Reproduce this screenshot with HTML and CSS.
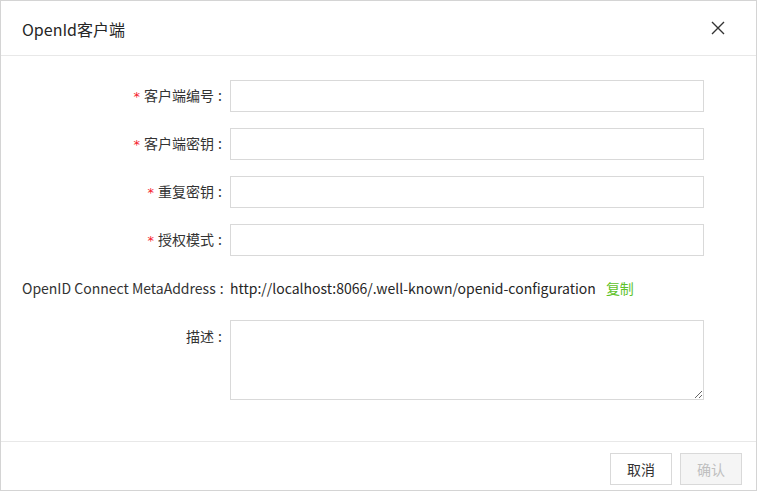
FILE: index.html
```html
<!DOCTYPE html>
<html lang="zh">
<head>
<meta charset="utf-8">
<title>OpenId客户端</title>
<link rel="stylesheet" href="styles.css">
</head>
<body>
<div class="modal">
  <div class="modal-header">
    <div class="modal-title">OpenId客户端</div>
    <button class="close" aria-label="close">
      <svg width="14" height="14" viewBox="0 0 14 14"><path d="M1 1L13 13M13 1L1 13" stroke="#333" stroke-width="1.4" fill="none"/></svg>
    </button>
  </div>
  <div class="modal-body">
    <div class="row">
      <label class="label"><span class="req">*</span>客户端编号<span class="colon">:</span></label>
      <input class="input" type="text">
    </div>
    <div class="row">
      <label class="label"><span class="req">*</span>客户端密钥<span class="colon">:</span></label>
      <input class="input" type="text">
    </div>
    <div class="row">
      <label class="label"><span class="req">*</span>重复密钥<span class="colon">:</span></label>
      <input class="input" type="text">
    </div>
    <div class="row">
      <label class="label"><span class="req">*</span>授权模式<span class="colon">:</span></label>
      <input class="input" type="text">
    </div>
    <div class="row">
      <label class="label">OpenID Connect MetaAddress<span class="colon">:</span></label>
      <div class="value">http://localhost:8066/.well-known/openid-configuration<a class="copy">复制</a></div>
    </div>
    <div class="row row-top">
      <label class="label">描述<span class="colon">:</span></label>
      <textarea class="textarea"></textarea>
    </div>
  </div>
  <div class="modal-footer">
    <button class="btn">取消</button>
    <button class="btn btn-disabled" disabled>确认</button>
  </div>
</div>
</body>
</html>
```
FILE: styles.css
```css
* { box-sizing: border-box; }
html, body { margin: 0; padding: 0; background: #fff; }
body {
  font-family: "Noto Sans CJK SC", "Noto Sans", sans-serif;
  font-size: 14px;
  color: #333;
}
.modal {
  width: 757px;
  height: 491px;
  border: 1px solid #d4d4d4;
  display: flex;
  flex-direction: column;
}
.modal-header {
  height: 55px;
  flex: none;
  border-bottom: 1px solid #e8e8e8;
  display: flex;
  align-items: center;
  justify-content: space-between;
  padding: 0 31px 0 21px;
}
.modal-title {
  font-size: 16px;
  color: #262626;
  line-height: 24px;
  padding-top: 1px;
}
.close {
  border: 0;
  background: none;
  padding: 0;
  width: 14px;
  height: 14px;
  display: flex;
  cursor: pointer;
}
.modal-body {
  flex: 1;
  padding: 24px 0 0 21px;
  display: flex;
  flex-direction: column;
  gap: 16px;
}
.row {
  display: flex;
  align-items: center;
  height: 32px;
}
.row-top {
  align-items: flex-start;
  height: 80px;
}
.label {
  width: 208px;
  flex: none;
  text-align: right;
  line-height: 32px;
  color: #333;
  white-space: nowrap;
}
.colon {
  margin: 0 8px 0 4px;
}
.req {
  color: #f5222d;
  margin-right: 4px;
  font-family: "DejaVu Sans", sans-serif;
  font-size: 13px;
}
.input {
  width: 474px;
  height: 32px;
  border: 1px solid #d9d9d9;
  border-radius: 0;
  padding: 0 8px;
  font: inherit;
  outline: none;
}
.value {
  line-height: 32px;
  color: #262626;
  white-space: nowrap;
}
.copy {
  color: #5ec22a;
  margin-left: 10px;
  cursor: pointer;
}
.textarea {
  width: 474px;
  height: 80px;
  border: 1px solid #d9d9d9;
  border-radius: 0;
  font: inherit;
  padding: 4px 8px;
  resize: vertical;
  outline: none;
}
.modal-footer {
  height: 49px;
  flex: none;
  border-top: 1px solid #e8e8e8;
  display: flex;
  justify-content: flex-end;
  align-items: flex-start;
  gap: 8px;
  padding: 11px 14px 0 0;
}
.btn {
  width: 62px;
  height: 32px;
  border: 1px solid #d9d9d9;
  background: #fff;
  font: inherit;
  color: #333;
  border-radius: 0;
  padding: 0;
  cursor: pointer;
}
.btn-disabled {
  background: #f5f5f5;
  color: #bfbfbf;
  cursor: not-allowed;
}
```
